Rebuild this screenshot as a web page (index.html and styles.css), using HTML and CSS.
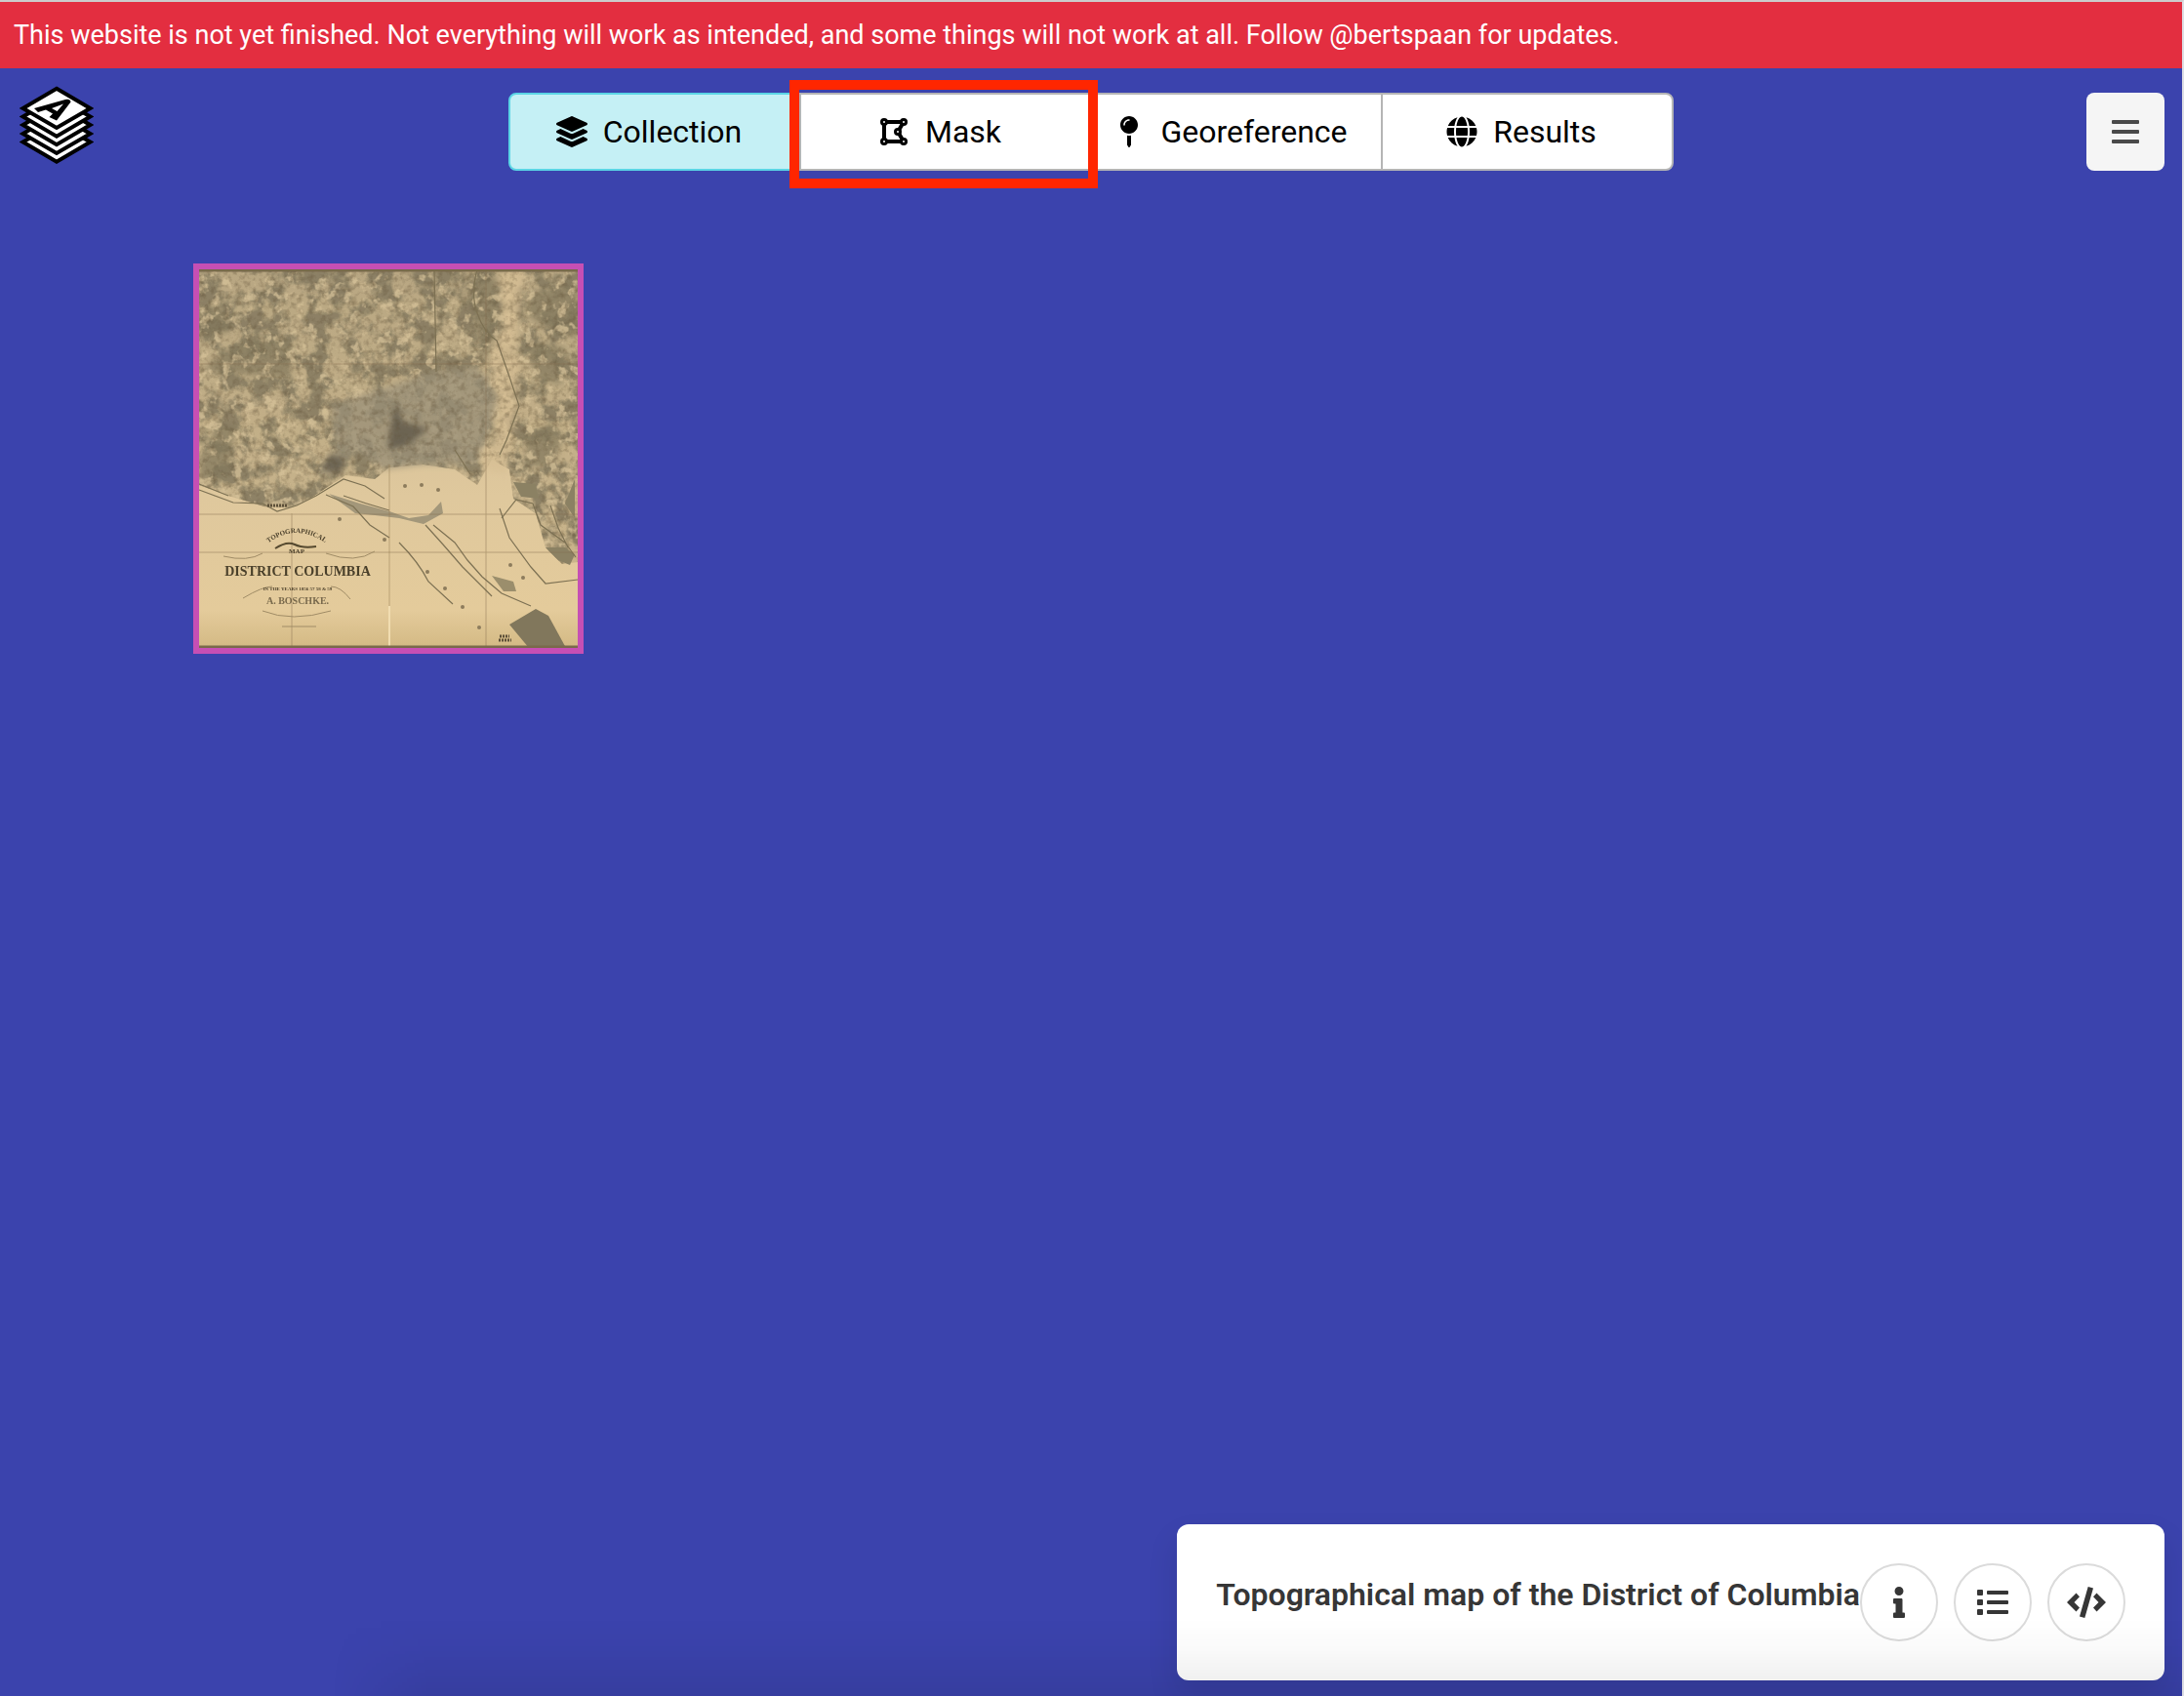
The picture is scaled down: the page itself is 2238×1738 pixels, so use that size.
FILE: index.html
```html
<!DOCTYPE html>
<html lang="en">
<head>
<meta charset="utf-8">
<title>Allmaps Editor</title>
<link rel="stylesheet" href="styles.css">
</head>
<body>
<div class="app">
  <div class="banner">This website is not yet finished. Not everything will work as intended, and some things will not work at all. Follow @bertspaan for updates.</div>

  <header class="header">
    <a class="logo" href="#" aria-label="Home">
      <svg width="76" height="80" viewBox="20 88 76 80" aria-hidden="true">
        <g fill="#fff" stroke="#000" stroke-width="4">
          <path d="M58 125.500L92.500 145.500 58 165.700 23.500 145.500z"/>
          <path d="M58 117L92.500 137 58 157 23.500 137z"/>
          <path d="M58 108L92.500 128 58 148.300 23.500 128z"/>
          <path d="M58 99.500L92.500 119.500 58 139.700 23.500 119.500z"/>
          <path d="M58 90.700L92.500 111 58 131 23.500 111z"/>
        </g>
        <path fill-rule="evenodd" d="M35 111L67 102Q72 101 72.500 104.500L58 123.500 50.500 120 54 116.500 47 112.500 39 115zM53 111L58.500 114 65 106.500z"/>
      </svg>
    </a>

    <nav class="steps" aria-label="Steps">
      <a class="step step-active" href="#" aria-current="page">
        <svg width="32" height="32" viewBox="0 0 512 512" aria-hidden="true"><path d="M12.410 148.020l232.940 105.670c6.800 3.090 14.490 3.090 21.290 0l232.940-105.670c16.550-7.510 16.550-32.520 0-40.030L266.650 2.310a25.607 25.607 0 0 0-21.290 0L12.410 107.980c-16.550 7.510-16.550 32.530 0 40.040zm487.180 88.280l-58.090-26.330-161.640 73.270c-7.560 3.430-15.590 5.170-23.860 5.170s-16.290-1.740-23.860-5.170L70.510 209.970l-58.100 26.330c-16.550 7.500-16.550 32.500 0 40l232.940 105.590c6.800 3.080 14.490 3.080 21.290 0L499.590 276.300c16.550-7.500 16.550-32.500 0-40zm0 127.800l-57.870-26.230-161.860 73.370c-7.560 3.430-15.590 5.170-23.860 5.170s-16.290-1.740-23.860-5.170L70.290 337.870 12.410 364.100c-16.550 7.500-16.550 32.500 0 40l232.940 105.590c6.800 3.080 14.490 3.080 21.290 0L499.590 404.100c16.550-7.500 16.550-32.500 0-40z"/></svg>
        <span>Collection</span>
      </a>
      <a class="step step-marked" href="#">
        <svg width="32" height="32" viewBox="0 0 32 32" fill="none" stroke="#000" aria-hidden="true">
          <path stroke-width="4" d="M6 6H26L20 16 26 26H6z"/>
          <g fill="#fff" stroke-width="3"><circle cx="6" cy="6" r="2.500"/><circle cx="26" cy="6" r="2.500"/><circle cx="20" cy="16" r="2.500"/><circle cx="26" cy="26" r="2.500"/><circle cx="6" cy="26" r="2.500"/></g>
        </svg>
        <span>Mask</span>
      </a>
      <a class="step" href="#">
        <svg width="32" height="32" viewBox="-112 0 512 512" aria-hidden="true"><path d="M112 316.940v156.690l22.020 33.020c4.750 7.120 15.220 7.120 19.970 0L176 473.630V316.940c-10.390 1.920-21.060 3.060-32 3.060s-21.610-1.140-32-3.060zM144 0C64.470 0 0 64.470 0 144s64.470 144 144 144 144-64.470 144-144S223.530 0 144 0zm0 76c-37.500 0-68 30.500-68 68 0 6.620-5.380 12-12 12s-12-5.380-12-12c0-50.730 41.280-92 92-92 6.620 0 12 5.380 12 12s-5.380 12-12 12z"/></svg>
        <span>Georeference</span>
      </a>
      <a class="step" href="#">
        <svg width="32" height="32" viewBox="-8 0 512 512" aria-hidden="true"><path d="M336.500 160C322 70.700 287.800 8 248 8s-74 62.700-88.500 152h177zM152 256c0 22.200 1.200 43.500 3.300 64h185.300c2.100-20.500 3.300-41.800 3.300-64s-1.200-43.500-3.300-64H155.300c-2.100 20.500-3.300 41.800-3.300 64zm324.700-96c-28.600-67.900-86.500-120.400-158-141.600 24.400 33.800 41.200 84.700 50 141.600h108zM177.200 18.400C105.800 39.600 47.800 92.100 19.300 160h108c8.700-56.900 25.500-107.800 49.900-141.600zM487.400 192H372.700c2.100 21 3.300 42.500 3.300 64s-1.200 43-3.300 64h114.600c5.500-20.500 8.600-41.800 8.600-64s-3.100-43.500-8.500-64zM120 256c0-21.500 1.200-43 3.300-64H8.600C3.200 212.500 0 233.800 0 256s3.200 43.500 8.600 64h114.600c-2-21-3.200-42.500-3.200-64zm39.500 96c14.500 89.300 48.700 152 88.500 152s74-62.700 88.500-152h-177zm159.300 141.600c71.400-21.200 129.400-73.700 158-141.600h-108c-8.800 56.900-25.600 107.800-50 141.600zM19.300 352c28.600 67.900 86.500 120.400 158 141.600-24.400-33.800-41.200-84.700-50-141.600h-108z"/></svg>
        <span>Results</span>
      </a>
    </nav>

    <button class="menu" type="button" aria-label="Menu">
      <svg width="28" height="26" viewBox="0 0 28 26" fill="#4a4a4a" aria-hidden="true"><rect y="1" width="28" height="4" rx="1"/><rect y="11" width="28" height="4" rx="1"/><rect y="21" width="28" height="4" rx="1"/></svg>
    </button>
  </header>

  <main class="collection">
    <a class="map" href="#" aria-label="Topographical map of the District of Columbia">
      <svg viewBox="0 0 388 388" aria-hidden="true">
        <defs>
          <linearGradient id="paper" x1="0" y1="0" x2="0" y2="1"><stop offset="0" stop-color="#cbb791"/><stop offset=".6" stop-color="#dfc89d"/><stop offset=".9" stop-color="#e4cb9b"/><stop offset="1" stop-color="#d3b984"/></linearGradient>
          <filter id="woods" x="0" y="0" width="1" height="1" color-interpolation-filters="sRGB">
            <feTurbulence type="fractalNoise" baseFrequency=".045" numOctaves="5" seed="23"/>
            <feColorMatrix values="0 0 0 0 .52  0 0 0 0 .48  0 0 0 0 .375  5 0 0 0 -2.100"/>
            <feComposite in2="SourceGraphic" operator="in"/>
          </filter>
          <filter id="fields" x="0" y="0" width="1" height="1" color-interpolation-filters="sRGB">
            <feTurbulence type="fractalNoise" baseFrequency=".09" numOctaves="3" seed="8"/>
            <feColorMatrix values="0 0 0 0 .84  0 0 0 0 .76  0 0 0 0 .6  0 7 0 0 -3.900"/>
            <feComposite in2="SourceGraphic" operator="in"/>
          </filter>
          <filter id="grain" x="0" y="0" width="1" height="1" color-interpolation-filters="sRGB">
            <feTurbulence type="fractalNoise" baseFrequency=".16" numOctaves="3" seed="4"/>
            <feColorMatrix values="0 0 0 0 .38  0 0 0 0 .32  0 0 0 0 .22  0 2 0 0 -.900"/>
            <feComposite in2="SourceGraphic" operator="in"/>
          </filter>
          <filter id="soft" x="-.2" y="-.2" width="1.400" height="1.400"><feGaussianBlur stdDeviation="3"/></filter>
          <filter id="fine" x="-.1" y="-.1" width="1.200" height="1.200"><feGaussianBlur stdDeviation=".7"/></filter>
          <path id="land" d="M0 0H388V300L372 302 355 285 345 250 322 235 318 205 300 195 285 221 262 205 230 200 195 203 180 215 150 211 115 234 95 244 70 244 30 232 0 221z"/>
        </defs>
        <rect width="388" height="388" fill="url(#paper)"/>
        <use href="#land" fill="#8e8160" opacity=".3"/>
        <use href="#land" filter="url(#woods)" opacity=".85"/>
        <g fill="#81775c" opacity=".7" filter="url(#soft)">
          <path d="M45 75L85 68 98 85 92 112 50 108 5 105 15 92z"/>
          <path d="M0 38L25 40 35 62 10 70 0 65zM0 190L30 182 35 210 0 218zM15 155L38 162 32 190 12 188z"/>
          <path d="M282 0L305 10 308 50 300 70 292 100 284 55 275 30zM335 75L375 80 372 118 345 112zM340 25L388 10V70L355 60 335 45z"/>
          <path d="M335 170L362 158 372 175 362 205 335 200z"/>
        </g>
        <use href="#land" filter="url(#fields)" opacity=".75"/>
        <path d="M135 140L180 125 240 105 285 100 305 125 300 160 285 200 230 200 190 205 160 185 145 205 120 212 140 185z" fill="#9a9078" opacity=".75" filter="url(#soft)"/>
        <path d="M197 155L203 135 207 155 235 163 215 180 193 184zM125 205L135 188 150 195 145 212z" fill="#4f4a3c" opacity=".65" filter="url(#soft)"/>
        <path d="M308 0L334 0 330 35 325 70 328 110 322 160 315 210 292 205 286 188 300 178 310 140 298 115 302 78 312 60z" fill="#d8c095" opacity=".8" filter="url(#soft)"/>
        <use href="#land" filter="url(#grain)" opacity=".5"/>
        <g filter="url(#fine)">
          <path d="M133 230L165 240 195 248 215 255 235 252 248 238 250 250 230 261 205 255 180 252 160 250z" fill="#a3977a"/>
          <path d="M300 314L322 320 325 330 312 330z" fill="#9b8e6c"/>
          <path d="M322 218L345 220 348 235 330 233zM385 215V255L375 240zM355 285L375 285 385 292 380 303 368 298z" fill="#8b8164"/>
          <path d="M345 348L358 355 376 388H338L318 364z" fill="#81775b"/>
          <g fill="none" stroke="#7d7153" stroke-width="1.200">
            <path d="M0 226L35 239 65 240 80 248 100 242 120 232 148 215 170 222 190 235M0 220L30 232M130 231L158 243 175 262 195 275M148 232Q170 240 195 247M240 262L262 280 275 298 290 315 310 332 340 345M232 262L250 282 270 305 300 335M205 280Q225 300 235 320L260 343M308 245L318 275 340 305 355 322 388 318"/>
            <path d="M285 0Q278 25 285 45T305 73L318 110 328 140 315 175 308 190M262 185L278 210M241 0L243 105M310 255L325 236 342 240 350 262 375 280 386 295M360 242L368 265 378 285"/>
          </g>
          <g stroke="#806b49" stroke-width="1" opacity=".45"><path d="M0 251H388M0 290H388M294 0V388M95 250V388M0 97H388"/></g>
          <path d="M195 200V360" stroke="#92794f" opacity=".5"/><path d="M195 345V388" stroke="#f1ddb1" stroke-width="2"/>
          <path d="M0 1H388M0 387H388" stroke="#796b4b" stroke-width="3"/>
          <g fill="none" stroke="#a08c66"><path d="M25 294Q50 300 65 291M130 291Q160 302 180 289M45 337Q65 325 75 325M155 338Q145 325 135 325M65 350Q95 362 135 350M85 366H120"/><path stroke="#54482f" stroke-width="2" d="M78 286Q90 278 98 282T120 284"/></g>
          <g fill="#4a3f2a" font-family="'Liberation Serif', serif" font-weight="700" text-anchor="middle">
            <path id="arch" d="M66 284Q100 256 134 284" fill="none"/>
            <text font-size="7"><textPath href="#arch" startOffset="50%">TOPOGRAPHICAL</textPath></text>
            <text x="100" y="291" font-size="7">MAP</text>
            <text x="101" y="314" font-size="14">DISTRICT COLUMBIA</text>
            <text x="101" y="329" font-size="5">IN THE YEARS 1856 57 58 &amp; 59</text>
            <text x="101" y="343" font-size="10" opacity=".7">A. BOSCHKE.</text>
          </g>
          <path d="M70 242H90M308 376H318M307 380H320" stroke="#5b4f38" stroke-width="3" stroke-dasharray="2 1"/>
          <g fill="#8d7c5b"><circle cx="144" cy="256" r="2"/><circle cx="190" cy="277" r="2"/><circle cx="211" cy="222" r="2"/><circle cx="228" cy="221" r="2"/><circle cx="245" cy="226" r="2"/><circle cx="252" cy="327" r="2"/><circle cx="270" cy="346" r="2"/><circle cx="287" cy="367" r="2"/><circle cx="234" cy="310" r="2"/><circle cx="332" cy="316" r="2"/><circle cx="319" cy="303" r="2"/></g>
        </g>
      </svg>
    </a>
  </main>

  <footer class="footer">
    <section class="card">
      <h1 class="title">Topographical map of the District of Columbia</h1>
      <div class="actions">
        <button class="round" type="button" aria-label="Information"><svg width="12" height="32" viewBox="0 0 192 512" aria-hidden="true"><path d="M20 424.229h20V279.771H20c-11.046 0-20-8.954-20-20V212c0-11.046 8.954-20 20-20h112c11.046 0 20 8.954 20 20v212.229h20c11.046 0 20 8.954 20 20V492c0 11.046-8.954 20-20 20H20c-11.046 0-20-8.954-20-20v-47.771c0-11.046 8.954-20 20-20zM96 0C56.235 0 24 32.235 24 72s32.235 72 72 72 72-32.235 72-72S135.764 0 96 0z"/></svg></button>
        <button class="round" type="button" aria-label="List"><svg width="32" height="32" viewBox="0 0 32 32" aria-hidden="true"><rect y="3" width="6" height="6" rx="1"/><rect y="13" width="6" height="6" rx="1"/><rect y="23" width="6" height="6" rx="1"/><rect x="10" y="4" width="22" height="4" rx="1"/><rect x="10" y="14" width="22" height="4" rx="1"/><rect x="10" y="24" width="22" height="4" rx="1"/></svg></button>
        <button class="round" type="button" aria-label="Source"><svg width="40" height="32" viewBox="0 0 40 32" aria-hidden="true"><path d="M21.700 0L27 1.500 18.300 32 13 30.500zM9.500 6.500L13 10.200 7.500 16 13 21.500 9.500 25.500 0 16zM30.500 6.500L40 16 30.500 25.500 27 21.500 32.500 16 27 10.200z"/></svg></button>
      </div>
    </section>
  </footer>
</div>
</body>
</html>
```
FILE: styles.css
```css
* {
  box-sizing: border-box;
}

body {
  margin: 0;
  font-family: Roboto, "Liberation Sans", sans-serif;
  color: #363636;
}

.app {
  position: relative;
  display: flex;
  flex-direction: column;
  min-height: 100vh;
  border-top: 2px solid #ccc;
  border-right: 2px solid #dedee4;
  background: #3b43ad;
}

.app::after {
  content: "";
  position: absolute;
  right: 0;
  bottom: 0;
  left: 340px;
  height: 80px;
  background: linear-gradient(transparent, rgba(0, 0, 0, 0.02) 40%, rgba(0, 0, 0, 0.08));
  mask-image: linear-gradient(to right, transparent, #000 100px);
  pointer-events: none;
}

.banner {
  padding: 14px;
  background: #e32e40;
  color: #fff;
  font-size: 27px;
  line-height: 40px;
}

.header {
  display: grid;
  grid-template-columns: 1fr auto 1fr;
  align-items: start;
  padding: 18px 18px 0;
}

.logo svg {
  display: block;
  margin-left: 2px;
}

.steps {
  display: flex;
  padding-top: 7px;
}

.step {
  position: relative;
  display: flex;
  align-items: center;
  justify-content: center;
  gap: 16px;
  width: 300px;
  height: 80px;
  padding-right: 12px;
  border: 2px solid #b5b5b5;
  background: #fff;
  color: #000;
  font-size: 32px;
  line-height: 48px;
  text-decoration: none;
}

.step + .step {
  margin-left: -2px;
}

.step:first-child {
  border-radius: 8px 0 0 8px;
}

.step:last-child {
  border-radius: 0 8px 8px 0;
}

.step-active {
  border-color: #5bd5e5;
  background: #c5f0f5;
}

.step-marked {
  z-index: 1;
}

.step-marked::after {
  content: "";
  position: absolute;
  inset: -15px -8px -20px -12px;
  border: 10px solid #ff2600;
}

.menu {
  display: flex;
  align-items: center;
  justify-content: center;
  justify-self: end;
  width: 80px;
  height: 80px;
  margin-top: 7px;
  padding: 0;
  border: 0;
  border-radius: 8px;
  background: #f5f5f5;
}

.collection {
  flex: 1;
  padding: 95px 198px;
}

.map {
  display: block;
  width: 400px;
  border: 6px solid #c64fb4;
}

.map svg {
  display: block;
  width: 100%;
}

.footer {
  display: flex;
  justify-content: flex-end;
  padding: 0 18px 16px;
}

.card {
  display: flex;
  align-items: flex-start;
  padding: 40px;
  border-radius: 12px;
  background: #fff;
  box-shadow: 0 16px 32px rgba(10, 10, 10, 0.1);
}

.title {
  margin: 0;
  font-size: 32px;
  font-weight: 600;
  line-height: 64px;
}

.actions {
  display: flex;
  gap: 16px;
}

.round {
  display: flex;
  align-items: center;
  justify-content: center;
  width: 80px;
  height: 80px;
  padding: 0;
  border: 2px solid #dbdbdb;
  border-radius: 50%;
  background: transparent;
  fill: #363636;
}
```
